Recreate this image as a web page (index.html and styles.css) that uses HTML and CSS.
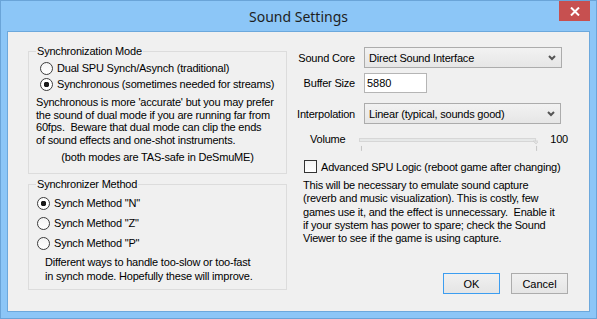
FILE: index.html
```html
<!DOCTYPE html>
<html>
  <head>
    <title>Sound Settings</title>
    <link rel="stylesheet" href="styles.css">
  </head>
  <body>
    <div class="window">
      <div class="titlebar">
        <span></span>
        <span class="title">Sound Settings</span>
        <button class="close" title="Close">
          <svg width="10" height="9" viewBox="0 0 10 9">
            <path d="M1 0.5 L9 8.5 M9 0.5 L1 8.5" stroke="#fff" stroke-width="2"/>
          </svg>
        </button>
      </div>

      <div class="client">
        <!-- left side: the two group boxes -->
        <div class="left">
          <fieldset class="group mode">
            <legend>Synchronization Mode</legend>
            <label class="radio-row"><input type="radio" name="mode"> Dual SPU Synch/Asynch (traditional)</label>
            <label class="radio-row"><input type="radio" name="mode" checked> Synchronous (sometimes needed for streams)</label>
            <p class="note">Synchronous is more 'accurate' but you may prefer<br>the sound of dual mode if you are running far from<br>60fps.&nbsp; Beware that dual mode can clip the ends<br>of sound effects and one-shot instruments.</p>
            <p class="safe">(both modes are TAS-safe in DeSmuME)</p>
          </fieldset>

          <fieldset class="group method">
            <legend>Synchronizer Method</legend>
            <label class="radio-row"><input type="radio" name="method" checked> Synch Method "N"</label>
            <label class="radio-row"><input type="radio" name="method"> Synch Method "Z"</label>
            <label class="radio-row"><input type="radio" name="method"> Synch Method "P"</label>
            <p class="note">Different ways to handle too-slow or too-fast<br>in synch mode. Hopefully these will improve.</p>
          </fieldset>
        </div>

        <!-- right side: core, buffer, interpolation, volume -->
        <div class="right">
          <div class="settings">
            <label>Sound Core</label>
            <div class="combo core">
              <span>Direct Sound Interface</span>
              <svg width="8" height="6" viewBox="0 0 8 6"><path d="M1 1 L4 4 L7 1" fill="none" stroke="#555" stroke-width="2"/></svg>
            </div>

            <label>Buffer Size</label>
            <input class="buffer" type="text" value="5880">

            <label class="row-sep">Interpolation</label>
            <div class="combo interp row-sep">
              <span>Linear (typical, sounds good)</span>
              <svg width="8" height="6" viewBox="0 0 8 6"><path d="M1 1 L4 4 L7 1" fill="none" stroke="#555" stroke-width="2"/></svg>
            </div>
          </div>

          <div class="volume">
            <span class="volume-label">Volume</span>
            <svg class="slider" width="182" height="20" viewBox="0 0 182 20">
              <rect x="0.5" y="6.5" width="179" height="3" fill="#e7e9e9" stroke="#d6d6d6"/>
              <path d="M177 9 L183 9 L180 12 Z" fill="#e3e3e3" stroke="#cfcfcf" stroke-width="0.8"/>
              <path d="M2.5 14 V19 M180.5 14 V19" stroke="#c4c4c4"/>
            </svg>
            <span class="volume-value">100</span>
          </div>

          <label class="check"><input type="checkbox"> Advanced SPU Logic (reboot game after changing)</label>
          <p class="note spu">This will be necessary to emulate sound capture<br>(reverb and music visualization). This is costly, few<br>games use it, and the effect is unnecessary.&nbsp; Enable it<br>if your system has power to spare; check the Sound<br>Viewer to see if the game is using capture.</p>

          <div class="buttons">
            <button class="btn default">OK</button>
            <button class="btn">Cancel</button>
          </div>
        </div>
      </div>
    </div>
  </body>
</html>
```

FILE: styles.css
```css
body {
  margin: 0;
  font-family: "Liberation Sans", Arial, sans-serif;
  font-size: 11px;
  letter-spacing: -0.2px;
  color: #000;
}

.window {
  width: 597px;
  height: 319px;
  box-sizing: border-box;
  background-color: #8cc6f7;
  border: 1px solid #6aa4d8;
  display: flex;
  flex-direction: column;
}

.titlebar {
  height: 30px;
  display: grid;
  grid-template-columns: 1fr auto 1fr;
  align-items: start;
}

.title {
  font-family: "Noto Sans", sans-serif;
  font-size: 14px;
  letter-spacing: 0;
  color: #1e1e1e;
  padding-top: 6px;
}

.close {
  justify-self: end;
  width: 31px;
  height: 20px;
  margin-right: 6px;
  padding: 0;
  border: none;
  background-color: #c75050;
  display: flex;
  align-items: center;
  justify-content: center;
}

.client {
  flex: 1;
  margin: 0 6px 6px 6px;
  border: 1px solid #6ca8dc;
  background-color: #f0f0f0;
  display: flex;
  gap: 9px;
  padding: 13px 20px 0 20px;
}

.left {
  width: 259px;
}

.group {
  margin: 0;
  padding: 0 7px;
  border: 1px solid #dcdcdc;
}

.group legend {
  padding: 0 1px;
  line-height: 13px;
}

.radio-row {
  display: flex;
  align-items: center;
  height: 16px;
  white-space: nowrap;
}

.radio-row input,
.check input {
  -webkit-appearance: none;
  appearance: none;
  width: 13px;
  height: 13px;
  margin: 0 4px 0 4px;
  border: 1px solid #3c3c3c;
  background: linear-gradient(#f4f4f4, #ffffff);
  box-sizing: border-box;
  flex-shrink: 0;
}

.radio-row input {
  border-radius: 50%;
}

.radio-row input:checked {
  background: radial-gradient(circle, #1a1a1a 0, #1a1a1a 2.6px, #ffffff 3px);
}

.note {
  margin: 0;
  line-height: 12.5px;
  white-space: nowrap;
}

.mode .radio-row:first-of-type {
  margin-top: 2px;
}

.mode .note {
  margin-top: 4px;
}

.safe {
  margin: 5px 0 0;
  line-height: 13px;
  text-align: center;
  padding-bottom: 9px;
}

.method {
  margin-top: 4px;
  padding-bottom: 6px;
}

.method .radio-row {
  height: 20px;
}

.method .radio-row:first-of-type {
  margin-top: 2px;
}

.method .radio-row input {
  margin: 0 4px 0 1px;
}

.method .note {
  margin-top: 2px;
  padding-left: 9px;
  line-height: 14px;
}

.right {
  width: 272px;
  display: flex;
  flex-direction: column;
  padding-top: 2px;
}

.settings {
  display: grid;
  grid-template-columns: 59px 1fr;
  column-gap: 9px;
  row-gap: 5px;
  align-items: center;
}

.settings label {
  justify-self: end;
  white-space: nowrap;
}

.settings .row-sep {
  margin-top: 5px;
}

.combo {
  height: 21px;
  box-sizing: border-box;
  border: 1px solid #acacac;
  background: linear-gradient(#f2f2f2, #e6e6e6);
  display: flex;
  align-items: center;
  justify-content: space-between;
  padding: 0 5px 0 4px;
}

.combo.core {
  width: 198px;
}

.combo.interp {
  width: 197px;
}

.buffer {
  width: 63px;
  height: 20px;
  box-sizing: border-box;
  margin: 0;
  border: 1px solid #b5b5b5;
  padding: 0 2px;
  font: inherit;
  background-color: #fff;
}

.volume {
  display: flex;
  align-items: flex-start;
  margin-top: 8px;
  padding-left: 14px;
  line-height: 14px;
}

.volume-label {
  width: 50px;
}

.volume-value {
  margin-left: 12px;
}

.check {
  display: flex;
  align-items: center;
  margin-top: 8px;
  padding-left: 4px;
  height: 13px;
  white-space: nowrap;
}

.check input {
  border-color: #333;
}

.note.spu {
  margin-top: 6px;
  padding-left: 7px;
  line-height: 13.3px;
}

.buttons {
  margin-top: auto;
  margin-bottom: 17px;
  display: flex;
  justify-content: flex-end;
  gap: 11px;
}

.btn {
  width: 57px;
  height: 21px;
  padding: 0;
  border: 1px solid #acacac;
  background: linear-gradient(#f0f0f0, #e5e5e5);
  font: inherit;
  color: #000;
}

.btn.default {
  border-color: #3c9df0;
}
```
